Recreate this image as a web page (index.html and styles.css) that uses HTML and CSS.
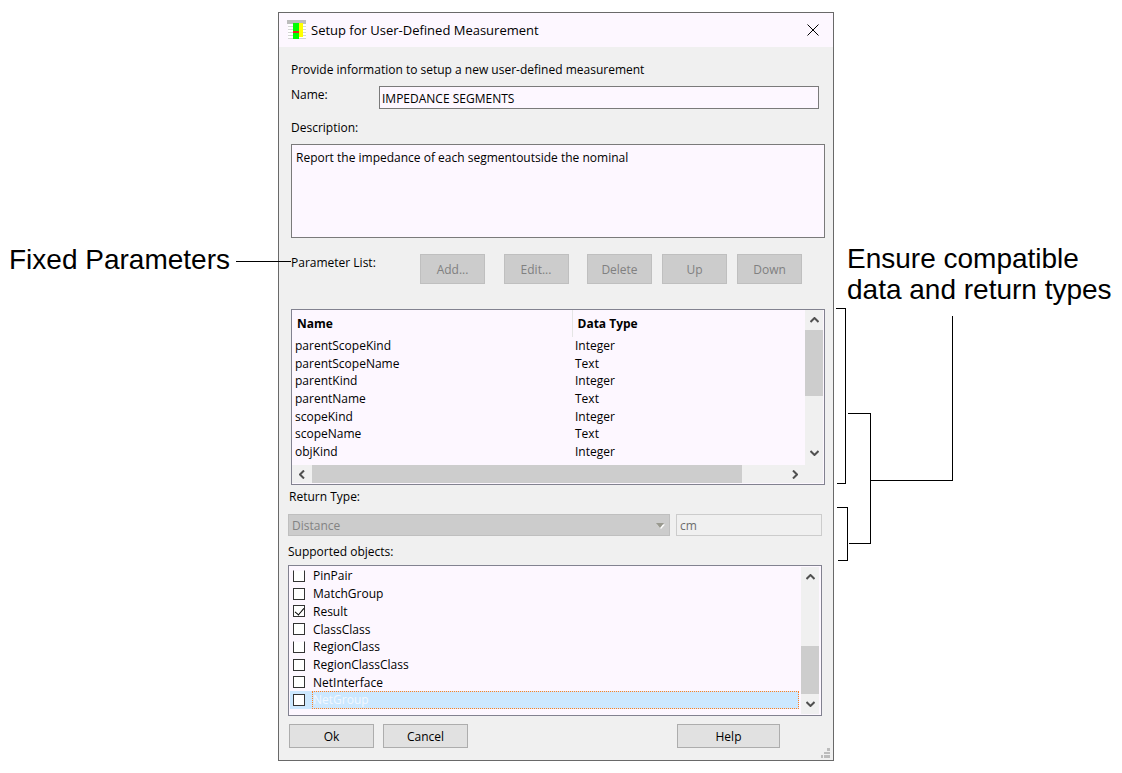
FILE: index.html
```
<!DOCTYPE html>
<html lang="en">
<head>
<meta charset="utf-8">
<title>Setup for User-Defined Measurement</title>
<link rel="stylesheet" href="styles.css">
</head>
<body>
<main class="figure">
  <div class="note note-left">
    <span>Fixed Parameters</span>
    <span class="leader"></span>
  </div>

  <section class="dialog" aria-labelledby="dialog-title">
    <header class="titlebar">
      <svg class="app-icon" width="20" height="20" viewBox="0 0 20 20" shape-rendering="crispEdges" aria-hidden="true">
        <path fill="#fff" d="M1 4h18v15H1z"/>
        <path fill="#bdbdbd" d="M0 0h19v4H0z"/>
        <path fill="#d4d4d4" d="M1 6h5v1H1zM1 9h5v1H1zM1 12h5v1H1zM1 15h5v1H1zM1 18h5v1H1zM16 6h3v1h-3zM16 9h3v1h-3zM16 12h3v1h-3zM16 15h3v1h-3zM12 18h7v1h-7z"/>
        <path fill="#0f0" d="M6 3h6v16H6z"/>
        <path fill="#ff0" d="M12 3h4v14h-4z"/>
        <path fill="#e22" d="M6 11h6v2H6z"/>
      </svg>
      <h1 class="title" id="dialog-title">Setup for User-Defined Measurement</h1>
      <button class="close" type="button" aria-label="Close">
        <svg width="12" height="12" viewBox="0 0 12 12"><path d="M.5.5l11 11M11.5.5l-11 11" stroke="#000" fill="none"/></svg>
      </button>
    </header>

    <form class="content">
      <p class="intro">Provide information to setup a new user-defined measurement</p>
      <div class="name-row">
        <label for="name">Name:</label>
        <input class="field" id="name" type="text" value="IMPEDANCE SEGMENTS">
      </div>
      <label class="description-label" for="description">Description:</label>
      <textarea class="field description" id="description">Report the impedance of each segmentoutside the nominal</textarea>

      <div class="param-row">
        <span class="param-label" id="param-label">Parameter List:</span>
        <div class="param-buttons">
          <button class="button" type="button" disabled>Add...</button>
          <button class="button" type="button" disabled>Edit...</button>
          <div class="button-group">
            <button class="button" type="button" disabled>Delete</button>
            <button class="button" type="button" disabled>Up</button>
            <button class="button" type="button" disabled>Down</button>
          </div>
        </div>
      </div>

      <div class="grid-box">
        <div class="grid-main">
          <table class="params" aria-labelledby="param-label">
            <thead><tr><th class="col-name">Name</th><th>Data Type</th></tr></thead>
            <tbody>
              <tr><td>parentScopeKind</td><td>Integer</td></tr>
              <tr><td>parentScopeName</td><td>Text</td></tr>
              <tr><td>parentKind</td><td>Integer</td></tr>
              <tr><td>parentName</td><td>Text</td></tr>
              <tr><td>scopeKind</td><td>Integer</td></tr>
              <tr><td>scopeName</td><td>Text</td></tr>
              <tr><td>objKind</td><td>Integer</td></tr>
            </tbody>
          </table>
          <div class="hscroll">
            <button class="arrow" type="button" aria-label="Scroll left"><svg width="6" height="9" viewBox="0 0 6 9"><path d="M5 .5l-4 4 4 4"/></svg></button>
            <div class="track"><div class="hthumb"></div></div>
            <button class="arrow" type="button" aria-label="Scroll right"><svg width="6" height="9" viewBox="0 0 6 9"><path d="M1 .5l4 4-4 4"/></svg></button>
          </div>
        </div>
        <div class="vscroll vscroll-params">
          <button class="arrow" type="button" aria-label="Scroll up"><svg width="9" height="6" viewBox="0 0 9 6"><path d="M.5 5l4-4 4 4"/></svg></button>
          <div class="track"><div class="vthumb"></div></div>
          <button class="arrow" type="button" aria-label="Scroll down"><svg width="9" height="6" viewBox="0 0 9 6"><path d="M.5 1l4 4 4-4"/></svg></button>
        </div>
      </div>

      <div class="lower">
        <label class="return-label" for="return-type">Return Type:</label>
        <div class="return-row">
          <div class="select-wrap">
            <select class="return-type" id="return-type" disabled><option>Distance</option></select>
            <svg class="caret" width="9" height="6" viewBox="0 0 9 6" aria-hidden="true"><path fill="#fff" d="M1 1.500h8L5 6z"/><path fill="#99998f" d="M0 0h8L4 5z"/></svg>
          </div>
          <input class="unit" type="text" value="cm" aria-label="Unit" disabled>
        </div>

        <p class="objects-label" id="objects-label">Supported objects:</p>
        <div class="objects">
          <ul class="object-list" aria-labelledby="objects-label">
            <li><label><input class="open-top" type="checkbox"><span>PinPair</span></label></li>
            <li><label><input type="checkbox"><span>MatchGroup</span></label></li>
            <li><label><input type="checkbox" checked><span>Result</span></label></li>
            <li><label><input type="checkbox"><span>ClassClass</span></label></li>
            <li><label><input class="open-top" type="checkbox"><span>RegionClass</span></label></li>
            <li><label><input type="checkbox"><span>RegionClassClass</span></label></li>
            <li><label><input type="checkbox"><span>NetInterface</span></label></li>
            <li class="selected"><label><input type="checkbox"><span>NetGroup</span></label></li>
          </ul>
          <div class="vscroll vscroll-objects">
            <button class="arrow" type="button" aria-label="Scroll up"><svg width="9" height="6" viewBox="0 0 9 6"><path d="M.5 5l4-4 4 4"/></svg></button>
            <div class="track"><div class="vthumb"></div></div>
            <button class="arrow" type="button" aria-label="Scroll down"><svg width="9" height="6" viewBox="0 0 9 6"><path d="M.5 1l4 4 4-4"/></svg></button>
          </div>
        </div>

        <div class="actions">
          <button class="button" type="button">Ok</button>
          <button class="button" type="button">Cancel</button>
          <button class="button help" type="button">Help</button>
        </div>
      </div>
    </form>
    <svg class="grip" width="9" height="10" viewBox="0 0 9 10" shape-rendering="crispEdges" aria-hidden="true"><path fill="#bcbcbc" d="M6 0h3v3H6zM3 4h6v2H3zM0 7h2v3H0zM3 7h6v3H3z"/></svg>
  </section>

  <div class="note note-right">
    <p>Ensure compatible<br>data and return types</p>
    <svg class="brackets" width="120" height="258" viewBox="0 0 120 258" shape-rendering="crispEdges" aria-hidden="true">
      <path fill="none" stroke="#000" d="M2 3.500h9.500v175H3M14 108.500h22.500v130H15M36 175.500h82.500V11M3 202.500h10.500v53H4"/>
    </svg>
  </div>
</main>
</body>
</html>
```
FILE: styles.css
```
* { box-sizing: border-box; }

body {
  margin: 0;
  background: #fff;
  color: #000;
  font: 12px/18px "Open Sans", "Noto Sans", sans-serif;
}

h1, p, ul { margin: 0; padding: 0; }

button, input, select, textarea { font: inherit; color: inherit; border-radius: 0; }

.figure {
  display: grid;
  grid-template-columns: 278fr 556fr 288fr;
  align-items: start;
  padding: 12px 0;
}

/* Callouts */
.note { font: 28px/31px "Liberation Sans", Arial, sans-serif; white-space: nowrap; }
.note-left {
  position: relative;
  z-index: 1;
  display: flex;
  align-items: center;
  gap: 6px;
  padding: 232px 0 0 9px;
}
.leader { flex: 1; height: 1px; margin-right: -13px; margin-top: 4px; background: #000; }
.note-right { padding-top: 231px; }
.note-right p { padding-left: 13px; }
.brackets { display: block; }

/* Dialog frame */
.dialog { position: relative; border: 1px solid #696969; background: #f0f0f0; }
.titlebar {
  display: flex;
  align-items: center;
  gap: 4px;
  height: 34px;
  padding: 0 13px 0 8px;
  background: #fdf7ff;
}
.title { flex: 1; font-size: 13px; font-weight: 400; }
.close { display: flex; padding: 1px; border: 0; background: none; }
.content { padding: 14px 8px 12px 12px; }

/* Upper fields */
.field { border: 1px solid #7a7a7a; background: #fdf7ff; outline: 0; }
.name-row { display: flex; align-items: flex-start; margin: 7px 6px 0 0; }
.name-row label { flex: 0 0 88px; }
.name-row .field { flex: 1; min-width: 0; height: 23px; padding: 1px 2px 0; }
.description-label { display: block; margin-top: 10px; }
.description { display: block; width: 100%; height: 94px; margin-top: 7px; padding: 4px; resize: none; }

.param-row { display: flex; margin-top: 16px; }
.param-label { flex: 0 0 129px; }
.param-buttons { display: flex; flex: 1; justify-content: space-between; padding-right: 23px; }
.button-group { display: flex; gap: 10px; }
.button { height: 24px; padding: 1px 0 0; border: 1px solid #adadad; background: #e1e1e1; }
.param-buttons .button { width: 65px; height: 30px; border-color: #bfbfbf; background: #ccc; color: #808080; }

/* Scrollbars */
.arrow { display: grid; place-items: center; flex: none; padding: 0; border: 0; background: none; }
.arrow path { fill: none; stroke: #505050; stroke-width: 2; }
.track { flex: 1; }
.hscroll, .vscroll { display: flex; background: #f0f0f0; }
.hscroll { height: 18px; }
.hscroll .arrow { width: 20px; }
.hthumb { width: 91%; height: 18px; background: #cdcdcd; }
.vscroll { flex: none; flex-direction: column; width: 18px; }
.vscroll .arrow { height: 20px; }
.vscroll .track { display: flex; flex-direction: column; }
.vthumb { background: #cdcdcd; }
.vscroll-params { padding-bottom: 20px; }
.vscroll-params .vthumb { height: 66px; }
.vscroll-objects .track { justify-content: flex-end; }
.vscroll-objects .vthumb { height: 48px; }

/* Parameter table */
.grid-box { display: flex; margin-top: 25px; padding: 0 1px 1px 0; border: 1px solid #828290; background: #fdf7ff; }
.grid-main { flex: 1; min-width: 0; }
.params { width: 100%; height: 151px; margin-bottom: 4px; border-collapse: collapse; table-layout: fixed; line-height: 16px; }
.params th, .params td { padding: 0 3px; text-align: left; }
.params th { height: 27px; padding: 0 5px; font-weight: 700; }
.col-name { width: 280px; border-right: 1px solid #e5e5e5; }

/* Return type and objects */
.lower { margin: 3px 3px 0 -3px; }
.return-label { display: block; padding-left: 1px; }
.return-row { display: grid; grid-template-columns: 382fr 146fr; gap: 6px; margin-top: 8px; }
.select-wrap { position: relative; display: flex; }
.return-type { appearance: none; width: 100%; height: 22px; padding: 1px 3px 0; border: 1px solid #bfbfbf; background: #ccc; color: #838383; opacity: 1; }
.caret { position: absolute; top: 9px; right: 5px; }
.unit { width: 100%; min-width: 0; height: 22px; padding: 1px 3px 0; border: 1px solid #ccc; background: #f0f0f0; color: #6d6d6d; }
.objects-label { margin-top: 7px; }
.objects { display: flex; height: 151px; margin-top: 4px; padding: 1px 2px 1px 1px; border: 1px solid #828290; background: #fdf7ff; }
.object-list { display: flex; flex: 1; flex-direction: column; height: 142px; margin-right: 2px; list-style: none; }
.object-list li { flex: 1; display: flex; min-height: 0; padding-left: 3px; line-height: 17px; }
.object-list label { display: flex; flex: 1; align-items: center; gap: 7px; }
.object-list span { flex: 1; padding: 1px 0 0 1px; line-height: 16px; }
.object-list input {
  appearance: none;
  flex: none;
  width: 12px;
  height: 12px;
  margin: 0;
  border: 1px solid #333;
  background: #fff;
}
.object-list .open-top { border-top-color: transparent; background-clip: padding-box; }
.object-list input:checked::after { content: ""; display: block; box-sizing: border-box; width: 5px; height: 9px; margin-left: 3px; border: solid #000; border-width: 0 1px 1px 0; transform: rotate(40deg); }
.object-list .selected { background: #cce8ff; }
.object-list .selected span { padding: 0; border: 1px dotted #ff8020; color: #f3f8ff; }

.actions { display: flex; gap: 9px; margin-top: 8px; padding: 0 42px 0 1px; }
.actions .button { width: 85px; }
.actions .help { width: 103px; margin-left: auto; }
.grip { position: absolute; right: 3px; bottom: 2px; }
```
